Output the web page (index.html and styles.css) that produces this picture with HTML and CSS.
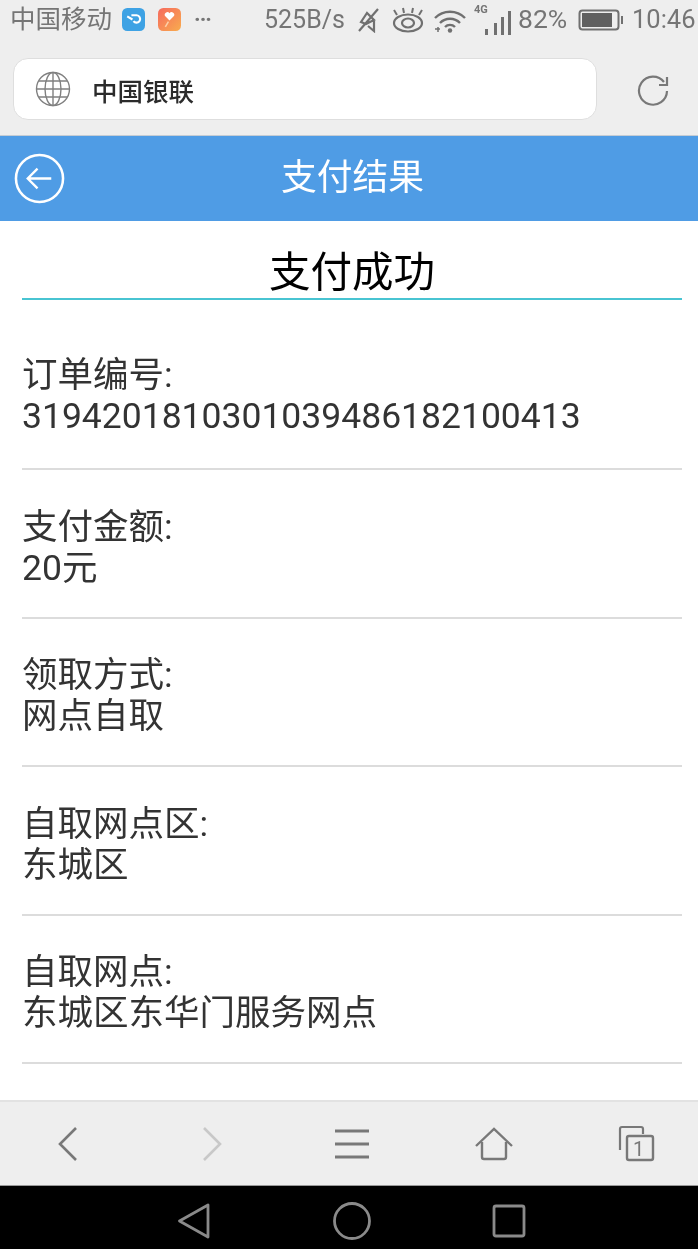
FILE: index.html
```html
<!DOCTYPE html>
<html lang="zh">
<head>
<meta charset="utf-8">
<title>支付结果</title>
<link rel="stylesheet" href="styles.css">
</head>
<body>
<div class="screen">
  <div class="status">
    <span class="carrier">中国移动</span>
    <svg class="app-icon first" viewBox="0 0 22 22"><rect width="22" height="22" rx="5" fill="#3ea2e4"/><path d="M5 8l5 3M9 7h5a3.500 3.500 0 1 1-3 5.500" fill="none" stroke="#fff" stroke-width="2"/></svg>
    <svg class="app-icon second" viewBox="0 0 22 22"><defs><linearGradient id="grad" x1="0" y1="0" x2="1" y2="1"><stop offset="0" stop-color="#f66a5e"/><stop offset="1" stop-color="#f8ac4e"/></linearGradient></defs><rect width="22" height="22" rx="5" fill="url(#grad)"/><path d="M11 12L7 8a2.500 2.500 0 0 1 4-3 2.500 2.500 0 0 1 4 3z" fill="#fff"/><path d="M10 13l-3 5" stroke="#fcd0a8" stroke-width="1.500"/></svg>
    <span class="dots">···</span>
    <span class="speed">525B/s</span>
    <svg class="mute" viewBox="0 0 24 26"><path d="M3 24L22 2M5 15l6-9 7 7-8 4zM12 19l6 5V14" fill="none" stroke="#707070" stroke-width="2.200"/></svg>
    <svg class="eye" viewBox="0 0 32 26"><ellipse cx="16" cy="16" rx="14" ry="8.500" fill="none" stroke="#707070" stroke-width="2.200"/><ellipse cx="16" cy="16" rx="6" ry="4.500" fill="none" stroke="#707070" stroke-width="2.200"/><path d="M5 8L2 3M12 6l-1-5M20 6l1-5M27 8l3-5" stroke="#707070" stroke-width="2"/></svg>
    <svg class="wifi" viewBox="0 0 34 26"><path d="M2 11a21 21 0 0 1 30 0M7 16a14 14 0 0 1 20 0M12 20a7 7 0 0 1 10 0" fill="none" stroke="#707070" stroke-width="2.400"/><circle cx="17" cy="23.500" r="2.200" fill="#707070"/><path d="M2 22h5M5 20v5" stroke="#707070" stroke-width="1.500"/></svg>
    <span class="signal">
      <span class="tag-4g">4G</span>
      <svg class="bars" viewBox="0 0 30 26"><path d="M2 19h3v6H2zM11 13h3v12h-3zM18 7h3v18h-3zM25 1h3v24h-3z" fill="#707070"/></svg>
    </span>
    <span class="battery-pct">82%</span>
    <svg class="battery" viewBox="0 0 46 24"><rect x="1.500" y="2.500" width="39" height="19" rx="3" fill="none" stroke="#707070" stroke-width="2"/><rect x="4" y="5" width="30" height="14" fill="#606060"/><path d="M43 8h2v8h-2z" fill="#707070"/></svg>
    <span class="clock">10:46</span>
  </div>

  <div class="address">
    <div class="address-field">
      <svg class="globe" viewBox="0 0 36 36"><g fill="none" stroke="#808080" stroke-width="1.400"><circle cx="18" cy="18" r="16.500"/><ellipse cx="18" cy="18" rx="8" ry="16.500"/><path d="M18 1.500v33M1.500 18h33M4 10h28M4 26h28"/></g></svg>
      <span class="address-text">中国银联</span>
    </div>
    <svg class="reload" viewBox="0 0 34 34"><path d="M28 9A14 14 0 1 0 31 18" fill="none" stroke="#787878" stroke-width="2.200"/><path d="M31 4v8h-8" fill="none" stroke="#787878" stroke-width="2.200"/></svg>
  </div>

  <header class="title-bar">
    <svg class="back" viewBox="0 0 52 52"><circle cx="26" cy="26" r="24" fill="none" stroke="#fff" stroke-width="2.600"/><path d="M38 26H14M24 16L14 26l10 10" fill="none" stroke="#fff" stroke-width="2.400"/></svg>
    <h1 class="page-title">支付结果</h1>
  </header>

  <main class="content">
    <h2 class="result">支付成功</h2>
    <div class="row row-first"><p>订单编号:</p><p>3194201810301039486182100413</p></div>
    <div class="row"><p>支付金额:</p><p>20元</p></div>
    <div class="row"><p>领取方式:</p><p>网点自取</p></div>
    <div class="row"><p>自取网点区:</p><p>东城区</p></div>
    <div class="row"><p>自取网点:</p><p>东城区东华门服务网点</p></div>
  </main>

  <nav class="toolbar">
    <svg class="tool" viewBox="0 0 40 40"><path d="M27 4L11 20l16 16" fill="none" stroke="#787878" stroke-width="2.600"/></svg>
    <svg class="tool" viewBox="0 0 40 40"><path d="M13 4l16 16-16 16" fill="none" stroke="#c8c8c8" stroke-width="2.600"/></svg>
    <svg class="tool" viewBox="0 0 40 40"><path d="M3 7h34M3 20h34M3 33h34" fill="none" stroke="#787878" stroke-width="2.800"/></svg>
    <svg class="tool" viewBox="0 0 40 40"><path d="M2 22L20 5l18 17M8 18v15a2 2 0 0 0 2 2h20a2 2 0 0 0 2-2V18" fill="none" stroke="#787878" stroke-width="2.400"/></svg>
    <span class="tabs">
      <svg class="tool" viewBox="0 0 40 40"><path d="M5 26V5a2 2 0 0 1 2-2h19a2 2 0 0 1 2 2v5" fill="none" stroke="#787878" stroke-width="2.200"/><rect x="12" y="12" width="26" height="24" rx="2" fill="none" stroke="#787878" stroke-width="2.400"/></svg>
      <span class="tab-count">1</span>
    </span>
  </nav>

  <div class="nav">
    <svg class="nav-back" viewBox="0 0 34 38"><path d="M2.500 19L31 3v32z" fill="none" stroke="#8a8a8a" stroke-width="2.800" stroke-linejoin="round"/></svg>
    <svg class="nav-home" viewBox="0 0 38 38"><circle cx="19" cy="19" r="17.500" fill="none" stroke="#8a8a8a" stroke-width="2.800"/></svg>
    <svg class="nav-recent" viewBox="0 0 34 34"><rect x="2" y="2" width="30" height="30" rx="2" fill="none" stroke="#8a8a8a" stroke-width="2.800"/></svg>
  </div>
</div>
</body>
</html>
```

FILE: styles.css
```css
* { box-sizing: border-box; }
html, body { margin: 0; padding: 0; background: #fff; }
.screen {
  width: 698px;
  height: 1249px;
  display: flex;
  flex-direction: column;
  overflow: hidden;
  font-family: Roboto, "Noto Sans CJK SC", sans-serif;
}
/* The reference is a soft, upscaled capture: soften the content, not the section edges. */
.status > *,
.address > *,
.title-bar > *,
.result,
.row,
.toolbar > *,
.nav > * {
  filter: blur(0.7px);
}
.status {
  height: 41px;
  flex: none;
  background: #eeeeee;
  color: #757575;
  display: flex;
  align-items: center;
  padding: 0 0 2px 10px;
  font-size: 25px;
  line-height: 1;
}
.carrier { width: 102px; font-size: 25.500px; white-space: nowrap; }
.app-icon { width: 23px; height: 23px; flex: none; }
.first { margin-left: 10px; }
.second { margin-left: 13px; }
.dots { width: 24px; margin-left: 13px; font-size: 22px; color: #757575; font-weight: 700; letter-spacing: -1px; }
.speed { margin-left: 46px; width: 92px; font-size: 25px; white-space: nowrap; }
.mute { width: 24px; height: 26px; flex: none; margin-left: 0; }
.eye { width: 32px; height: 26px; flex: none; margin-left: 12px; }
.wifi { width: 34px; height: 26px; flex: none; margin-left: 9px; }
.signal { position: relative; width: 39px; height: 32px; flex: none; margin-left: 7px; display: flex; align-items: flex-end; justify-content: flex-end; }
.tag-4g { position: absolute; left: 0; top: 0; font-size: 11px; font-weight: 700; }
.bars { width: 30px; height: 26px; }
.battery-pct { margin-left: 5px; width: 53px; font-size: 26.500px; }
.battery { width: 46px; height: 24px; flex: none; margin-left: 7px; }
.clock { margin-left: 8px; font-size: 25.500px; }

.address {
  height: 95px;
  flex: none;
  background: #eeeeee;
  display: flex;
  align-items: flex-start;
  padding: 17px 0 0 13px;
  border-bottom: 1px solid #c4ccd4;
}
.address-field {
  width: 584px;
  height: 62px;
  background: #fff;
  border: 1.500px solid #dedede;
  border-radius: 15px;
  display: flex;
  align-items: center;
  padding-left: 21px;
}
.globe { width: 36px; height: 36px; flex: none; }
.address-text { margin-left: 21px; font-size: 25.500px; font-weight: 500; color: #2b2b2b; }
.reload { width: 34px; height: 34px; flex: none; margin: 15px 0 0 39px; }

.title-bar {
  height: 85px;
  flex: none;
  background: #4f9ce5;
  position: relative;
  display: flex;
  align-items: center;
  justify-content: center;
  padding-left: 7px;
}
.back { position: absolute; left: 14px; top: 17px; width: 51px; height: 51px; }
.page-title { margin: 0; font-size: 35.800px; font-weight: 400; color: #fff; line-height: 1; }

.content {
  flex: 1;
  min-height: 0;
  overflow: hidden;
  background: #fff;
  padding: 0 16px 0 22px;
}
.result {
  margin: 0;
  height: 79px;
  padding-top: 28px;
  border-bottom: 2px solid #48c4d2;
  text-align: center;
  font-size: 41.500px;
  line-height: 48px;
  font-weight: 400;
  color: #000;
}
.row {
  height: 148.500px;
  padding-top: 36.500px;
  border-bottom: 2px solid #dcdcdc;
  font-size: 35.500px;
  line-height: 41px;
  color: #333;
}
.row-first { height: 170px; padding-top: 55px; }
.row p { margin: 0; white-space: nowrap; }

.toolbar {
  height: 86px;
  flex: none;
  background: #eeeeee;
  border-top: 2px solid #e2e2e2;
  display: flex;
  align-items: center;
  justify-content: space-between;
  padding: 0 43px 0 49px;
  border-bottom: 1px solid #999;
}
.tool { width: 40px; height: 40px; display: block; flex: none; }
.tabs { position: relative; display: block; }
.tab-count { position: absolute; left: 18px; top: 14px; font-size: 20px; line-height: 22px; color: #787878; }

.nav {
  height: 63px;
  flex: none;
  background: #000;
  display: flex;
  align-items: center;
  padding: 7px 0 0 177px;
}
.nav-back { width: 34px; height: 38px; flex: none; }
.nav-home { width: 38px; height: 38px; flex: none; margin-left: 122px; }
.nav-recent { width: 34px; height: 34px; flex: none; margin-left: 121px; }
```
